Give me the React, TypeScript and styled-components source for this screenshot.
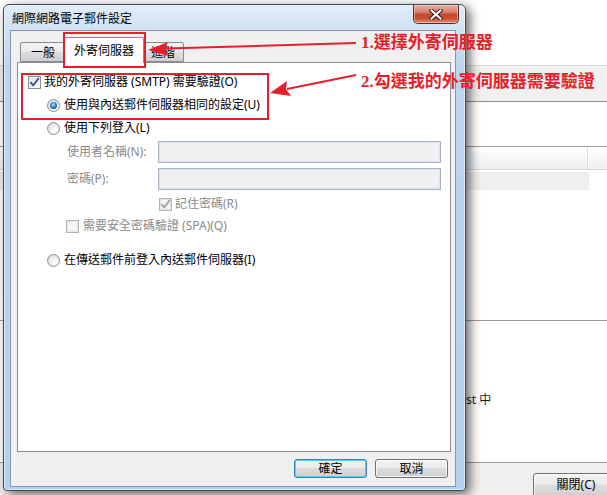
import React from "react";
import styled, { createGlobalStyle } from "styled-components";

const Global = createGlobalStyle`
  html, body { margin: 0; padding: 0; background: #fff; }
  * { box-sizing: border-box; }
`;

const RED = "#e61f2b";
const UI_FONT = `"Noto Sans", "Noto Sans CJK TC", sans-serif`;

const Stage = styled.div`
  position: relative;
  width: 607px;
  height: 495px;
  overflow: hidden;
  background: #fff;
  font-family: ${UI_FONT};
  font-size: 12px;
  color: #000;
`;

/* ---------- background window ---------- */
const BackWindow = styled.div`
  display: flex;
  flex-direction: column;
  width: 100%;
  height: 100%;
`;
const Blank = styled.div<{ $h: number }>`
  height: ${(p) => p.$h}px;
  background: #fff;
  flex: none;
`;
const Toolbar = styled.div`
  height: 37px;
  flex: none;
  background: #f0f0f0;
  border-top: 1px solid #d9d9d9;
  border-bottom: 1px solid #8d8d8d;
`;
const HLine = styled.div`
  height: 1px;
  flex: none;
  background: #9a9a9a;
`;
const ListHeader = styled.div`
  height: 24px;
  flex: none;
  display: flex;
  border-top: 1px solid #9a9a9a;
  border-bottom: 1px solid #d5d5d5;
  background: linear-gradient(#ffffff, #f4f5f7 60%, #eef0f2);
`;
const HeaderCell = styled.div<{ $w: number }>`
  width: ${(p) => p.$w}px;
  flex: none;
  border-right: 1px solid #dcdcdc;
  box-shadow: 1px 0 0 #fff;
`;
const SelRow = styled.div`
  margin-top: 2px;
  height: 18px;
  width: 589px;
  flex: none;
  background: #efefef;
`;
const TextArea = styled.div`
  height: 141px;
  flex: none;
  padding: 71px 0 0 466px;
  font-size: 12px;
  line-height: 16px;
  color: #1a1a1a;
`;
const Footer = styled.div`
  flex: 1;
  background: #f0f0f0;
  padding: 10px 0 0 533px;
`;

const WinButton = styled.div<{ $default?: boolean; $w: number; $h: number }>`
  width: ${(p) => p.$w}px;
  height: ${(p) => p.$h}px;
  flex: none;
  border: 1px solid ${(p) => (p.$default ? "#3c7fb1" : "#707070")};
  border-radius: 3px;
  background: linear-gradient(#f2f2f2 0%, #ebebeb 45%, #dddddd 50%, #cfcfcf 100%);
  box-shadow: inset 0 0 0 1px ${(p) => (p.$default ? "#48d6f8" : "rgba(255,255,255,0.8)")};
  display: flex;
  align-items: center;
  justify-content: center;
  font-size: 12px;
  line-height: 14px;
  color: #000;
`;

/* ---------- dialog ---------- */
const Dialog = styled.div`
  position: absolute;
  left: 3px;
  top: 4px;
  width: 463px;
  height: 487px;
  display: flex;
  flex-direction: column;
  border: 1px solid #3b4a5e;
  border-radius: 6px 6px 4px 4px;
  background: linear-gradient(180deg, #e2edf9 0px, #cfe1f4 26px, #bdd6f0 60px, #b3d0ee 100%);
  box-shadow: inset 0 0 0 1px rgba(255, 255, 255, 0.55), 4px 3px 11px rgba(0, 0, 0, 0.6);
`;
const TitleBar = styled.div`
  height: 25px;
  flex: none;
  display: flex;
  align-items: flex-start;
  padding: 0 6px 0 8px;
`;
const TitleText = styled.div`
  flex: 1;
  padding-top: 5px;
  font-size: 12px;
  line-height: 16px;
  color: #000;
  font-family: "Noto Sans CJK TC", sans-serif;
`;
const CloseButton = styled.div`
  width: 46px;
  height: 19px;
  flex: none;
  display: flex;
  align-items: center;
  justify-content: center;
  border: 1px solid #5e2620;
  border-top: none;
  border-radius: 0 0 5px 5px;
  background: linear-gradient(#eab0a2 0%, #d9806c 40%, #c24a30 52%, #c7502f 75%, #e2927a 100%);
  box-shadow: inset 0 0 0 1px rgba(255, 220, 210, 0.5);
`;

const Client = styled.div`
  flex: 1;
  margin: 0 9px 3px 6px;
  border: 1px solid #8796ab;
  background: #f0f0f0;
  display: flex;
  flex-direction: column;
  padding: 6px 4px 8px 6px;
`;

const TabStrip = styled.div`
  height: 26px;
  flex: none;
  margin-bottom: -1px;
  display: flex;
  align-items: flex-end;
  padding-left: 3px;
`;
const Tab = styled.div<{ $w: number; $active?: boolean; $ml?: number }>`
  width: ${(p) => p.$w}px;
  height: ${(p) => (p.$active ? 26 : 20)}px;
  margin-bottom: ${(p) => (p.$active ? 0 : 1)}px;
  margin-left: ${(p) => p.$ml ?? 0}px;
  flex: none;
  position: relative;
  z-index: ${(p) => (p.$active ? 2 : 1)};
  border: 1px solid #898c95;
  border-bottom: ${(p) => (p.$active ? "none" : "1px solid #898c95")};
  border-radius: 2px 2px 0 0;
  background: ${(p) =>
    p.$active ? "#fff" : "linear-gradient(#f3f3f3 0%, #ebebeb 50%, #dddddd 52%, #cfcfcf 100%)"};
  display: flex;
  align-items: center;
  justify-content: center;
  padding-top: ${(p) => (p.$active ? 0 : 1)}px;
  font-size: 12px;
  line-height: 14px;
  color: #000;
`;

const Panel = styled.div`
  height: 390px;
  flex: none;
  border: 1px solid #898c95;
  background: #fff;
  padding-top: 10px;
  display: flex;
  flex-direction: column;
`;

const Row = styled.div<{ $indent: number; $mt?: number; $h?: number }>`
  display: flex;
  align-items: center;
  height: ${(p) => p.$h ?? 18}px;
  margin-top: ${(p) => p.$mt ?? 0}px;
  padding-left: ${(p) => p.$indent}px;
  flex: none;
`;

const Label = styled.span<{ $disabled?: boolean; $gap?: number }>`
  margin-left: ${(p) => p.$gap ?? 0}px;
  font-size: 12px;
  line-height: 16px;
  white-space: nowrap;
  color: ${(p) => (p.$disabled ? "#8b8b8b" : "#000")};
`;
const FieldLabel = styled(Label)`
  width: 91px;
  flex: none;
`;
const Input = styled.div`
  width: 283px;
  height: 22px;
  flex: none;
  background: #f0f0f0;
  border: 1px solid #a7b2c5;
  box-shadow: inset 0 0 0 1px #dde3ec;
`;

const BoxBase = styled.span<{ $disabled?: boolean }>`
  width: 13px;
  height: 13px;
  flex: none;
  display: inline-flex;
  align-items: center;
  justify-content: center;
  border: 1px solid ${(p) => (p.$disabled ? "#b4b4b4" : "#8e8f8f")};
  background: ${(p) =>
    p.$disabled ? "#f4f4f4" : "linear-gradient(135deg, #dcdcdc 0%, #f0f0f0 50%, #ffffff 100%)"};
  box-shadow: inset 0 0 0 1px ${(p) => (p.$disabled ? "#e6e6e6" : "#f4f4f4")};
`;
const RadioBase = styled.span<{ $on?: boolean }>`
  width: 13px;
  height: 13px;
  flex: none;
  border-radius: 50%;
  display: inline-flex;
  align-items: center;
  justify-content: center;
  border: 1px solid #8e8f8f;
  background: radial-gradient(circle at 60% 65%, #ffffff 0%, #eeeeee 45%, #cfcfcf 100%);
`;
const RadioDot = styled.span`
  width: 7px;
  height: 7px;
  border-radius: 50%;
  background: radial-gradient(circle at 45% 40%, #c8ecff 0%, #3c9ad8 35%, #114a86 75%, #0b2f5a 100%);
`;

const Buttons = styled.div`
  display: flex;
  justify-content: flex-end;
  gap: 8px;
  margin-top: 7px;
  padding-right: 3px;
`;

/* ---------- annotations ---------- */
const RedBox = styled.div<{ $x: number; $y: number; $w: number; $h: number }>`
  position: absolute;
  left: ${(p) => p.$x}px;
  top: ${(p) => p.$y}px;
  width: ${(p) => p.$w}px;
  height: ${(p) => p.$h}px;
  border: 2px solid ${RED};
  pointer-events: none;
  z-index: 5;
`;
const Note = styled.div<{ $x: number; $y: number }>`
  position: absolute;
  left: ${(p) => p.$x}px;
  top: ${(p) => p.$y}px;
  font-family: "Liberation Serif", "Noto Sans CJK TC", serif;
  font-weight: bold;
  font-size: 17px;
  line-height: 20px;
  color: ${RED};
  white-space: nowrap;
  z-index: 6;
`;
const ArrowLayer = styled.svg`
  position: absolute;
  left: 0;
  top: 0;
  z-index: 6;
  pointer-events: none;
`;

function Checkbox({ checked, disabled }: { checked?: boolean; disabled?: boolean }) {
  return (
    <BoxBase $disabled={disabled}>
      {checked && (
        <svg width="11" height="11" viewBox="0 0 11 11">
          <path
            d="M1.8 5.6 L4.2 8.4 L9.4 1.6"
            fill="none"
            stroke={disabled ? "#a4a4a4" : "#3f5a98"}
            strokeWidth="1.9"
            strokeLinecap="round"
            strokeLinejoin="round"
          />
        </svg>
      )}
    </BoxBase>
  );
}

function Radio({ on }: { on?: boolean }) {
  return <RadioBase $on={on}>{on && <RadioDot />}</RadioBase>;
}

export default function App() {
  return (
    <Stage>
      <Global />
      <BackWindow>
        <Blank $h={65} />
        <Toolbar />
        <Blank $h={44} />
        <ListHeader>
          <HeaderCell $w={588} />
        </ListHeader>
        <SelRow />
        <Blank $h={130} />
        <HLine />
        <TextArea>st 中</TextArea>
        <HLine />
        <Footer>
          <WinButton $w={86} $h={24}>關閉(C)</WinButton>
        </Footer>
      </BackWindow>

      <Dialog>
        <TitleBar>
          <TitleText>網際網路電子郵件設定</TitleText>
          <CloseButton>
            <svg width="14" height="11" viewBox="0 0 14 11">
              <path d="M2.5 1.5 L11.5 9.5 M11.5 1.5 L2.5 9.5" stroke="#3b1710" strokeWidth="4" strokeLinecap="square" />
              <path d="M2.5 1.5 L11.5 9.5 M11.5 1.5 L2.5 9.5" stroke="#ffffff" strokeWidth="2.2" strokeLinecap="square" />
            </svg>
          </CloseButton>
        </TitleBar>
        <Client>
          <TabStrip>
            <Tab $w={46}>一般</Tab>
            <Tab $w={80} $ml={-2} $active>
              外寄伺服器
            </Tab>
            <Tab $w={42} $ml={-2}>進階</Tab>
          </TabStrip>
          <Panel>
            <Row $indent={10}>
              <Checkbox checked />
              <Label $gap={3}>我的外寄伺服器 (SMTP) 需要驗證(O)</Label>
            </Row>
            <Row $indent={29} $mt={5}>
              <Radio on />
              <Label $gap={4}>使用與內送郵件伺服器相同的設定(U)</Label>
            </Row>
            <Row $indent={29} $mt={5}>
              <Radio />
              <Label $gap={4}>使用下列登入(L)</Label>
            </Row>
            <Row $indent={49} $mt={4} $h={22}>
              <FieldLabel $disabled>使用者名稱(N):</FieldLabel>
              <Input />
            </Row>
            <Row $indent={49} $mt={5} $h={22}>
              <FieldLabel $disabled>密碼(P):</FieldLabel>
              <Input />
            </Row>
            <Row $indent={141} $mt={5}>
              <Checkbox checked disabled />
              <Label $gap={3} $disabled>記住密碼(R)</Label>
            </Row>
            <Row $indent={48} $mt={4}>
              <Checkbox disabled />
              <Label $gap={4} $disabled>需要安全密碼驗證 (SPA)(Q)</Label>
            </Row>
            <Row $indent={29} $mt={16}>
              <Radio />
              <Label $gap={4}>在傳送郵件前登入內送郵件伺服器(I)</Label>
            </Row>
          </Panel>
          <Buttons>
            <WinButton $w={73} $h={19} $default>確定</WinButton>
            <WinButton $w={73} $h={19}>取消</WinButton>
          </Buttons>
        </Client>
      </Dialog>

      <RedBox $x={63} $y={32} $w={83} $h={36} />
      <RedBox $x={21} $y={73} $w={248} $h={47} />
      <ArrowLayer width={607} height={495} viewBox="0 0 607 495">
        <path d="M356 43 L165 48.5" stroke={RED} strokeWidth="2" fill="none" />
        <path d="M148 50 L168 42 L165 48.5 L168 56 Z" fill={RED} />
        <path d="M356 75 L287 89" stroke={RED} strokeWidth="2" fill="none" />
        <path d="M270 93 L287 81 L286 89 L291 96 Z" fill={RED} />
      </ArrowLayer>
      <Note $x={361} $y={33}>1.選擇外寄伺服器</Note>
      <Note $x={361} $y={72}>2.勾選我的外寄伺服器需要驗證</Note>
    </Stage>
  );
}
